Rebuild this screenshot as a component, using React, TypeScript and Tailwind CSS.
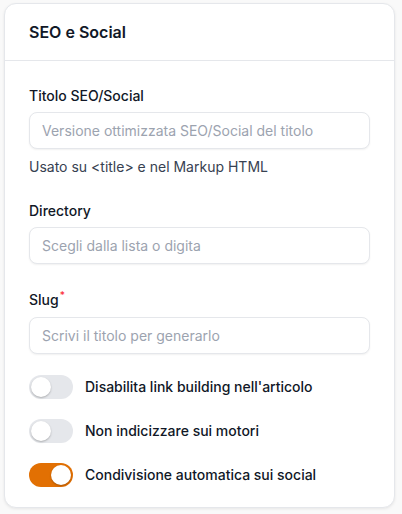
import React, { useState } from "react";

function Toggle({ on, label }: { on: boolean; label: string }) {
  const [v, setV] = useState(on);
  return (
    <div className="flex items-center gap-3 h-6">
      <button
        onClick={() => setV(!v)}
        className={`relative w-[44px] h-6 rounded-full p-[2px] flex items-center ${v ? "bg-[#e27003] justify-end" : "bg-[#e5e7eb] justify-start"}`}
      >
        <span className="block w-5 h-5 rounded-full bg-white shadow-[0_1px_2px_rgba(0,0,0,0.25)]" />
      </button>
      <span className="text-[14px] leading-5 font-medium text-[#111827]">{label}</span>
    </div>
  );
}

function Field({ label, placeholder, required, helper, className = "" }: { label: string; placeholder: string; required?: boolean; helper?: string; className?: string }) {
  return (
    <div className={`flex flex-col ${className}`}>
      <label className="text-[14px] leading-5 font-medium text-[#111827] mb-1.5">
        {label}
        {required && <span className="relative -top-[6px] text-[10px] text-red-500 ml-[1px]">*</span>}
      </label>
      <input
        placeholder={placeholder}
        className="h-[37px] w-full rounded-lg border border-[#e5e7eb] bg-white px-3 text-[14px] text-[#111827] placeholder:text-[#9ca3af] shadow-[0_1px_2px_rgba(0,0,0,0.06)] outline-none"
      />
      {helper && <p className="mt-2 text-[14px] leading-5 text-[#374151]">{helper}</p>}
    </div>
  );
}

export default function App() {
  return (
    <div className="min-h-[514px] w-[402px] bg-[#f9f9f9] pt-[3px] pl-1" style={{ fontFamily: "Inter, 'Noto Sans', sans-serif" }}>
      <div className="w-[391px] rounded-xl border border-[#e5e7eb] bg-white shadow-[0_1px_3px_rgba(0,0,0,0.08)]">
        <div className="px-6 py-4 border-b border-[#e5e7eb]">
          <h2 className="text-[16px] leading-6 font-semibold text-[#111827]">SEO e Social</h2>
        </div>
        <div className="px-6 pt-[25px] pb-5 flex flex-col">
          <Field label="Titolo SEO/Social" placeholder="Versione ottimizzata SEO/Social del titolo" helper="Usato su <title> e nel Markup HTML" />
          <Field className="mt-6" label="Directory" placeholder="Scegli dalla lista o digita" />
          <Field className="mt-[26px]" label="Slug" required placeholder="Scrivi il titolo per generarlo" />
          <div className="mt-[21px] flex flex-col gap-5">
            <Toggle on={false} label="Disabilita link building nell'articolo" />
            <Toggle on={false} label="Non indicizzare sui motori" />
            <Toggle on={true} label="Condivisione automatica sui social" />
          </div>
        </div>
      </div>
    </div>
  );
}
